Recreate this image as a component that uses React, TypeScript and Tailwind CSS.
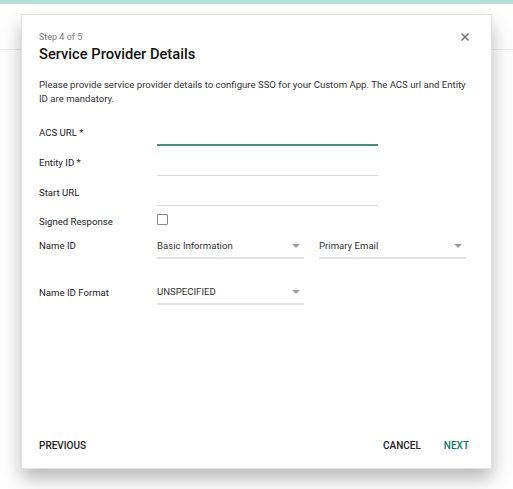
import React from "react";

function Arrow() {
  return (
    <svg width="8" height="4" viewBox="0 0 8 4" className="shrink-0">
      <path d="M0 0 L8 0 L4 4 Z" fill="#a0a0a0" />
    </svg>
  );
}

function Select({ value }: { value: string }) {
  return (
    <div className="w-[147px] h-[24px] flex items-center justify-between border-b-2 border-[#e3e3e3] pr-[4px]">
      <span className="text-[9.6px] text-[#333]">{value}</span>
      <Arrow />
    </div>
  );
}

export default function App() {
  return (
    <div className="relative w-[513px] h-[489px] bg-white overflow-hidden" style={{ fontFamily: "Roboto, 'Liberation Sans', sans-serif" }}>
      <div className="h-[4px] bg-[#b4dfd9]" />
      <div className="mt-[45px] h-px bg-[#ececec]" />

      <div className="absolute left-[21px] top-[14px] w-[471px] h-[455px] bg-white border border-[#e2e2e2] shadow-[0_10px_18px_rgba(0,0,0,0.28)] flex flex-col">
        <button className="absolute right-[22px] top-[18px] w-[8px] h-[8px] flex items-center justify-center">
          <svg width="8" height="8" viewBox="0 0 8 8">
            <path d="M0.5 0.5 L7.5 7.5 M7.5 0.5 L0.5 7.5" stroke="#6b6b6b" strokeWidth="1.4" />
          </svg>
        </button>

        <div className="pl-[17px] pr-[18px] pt-[16px]">
          <div className="text-[9px] leading-[13px] text-[#7a7a7a]">Step 4 of 5</div>
          <div className="text-[14.7px] leading-[20px] font-medium text-[#111]">Service Provider Details</div>
          <p className="mt-[14px] text-[9.6px] leading-[14px] text-[#333]">
            Please provide service provider details to configure SSO for your Custom App. The ACS url and Entity ID are mandatory.
          </p>

          <div className="mt-[15px] flex flex-col">
            <div className="flex h-[30px] items-start">
              <div className="w-[118px] pt-[5px] text-[9.6px] leading-[14px] text-[#222]">ACS URL *</div>
              <div className="w-[221px] h-[25px] border-b-2 border-[#4f8a7c]" />
            </div>
            <div className="flex h-[30px] items-start">
              <div className="w-[118px] pt-[5px] text-[9.6px] leading-[14px] text-[#222]">Entity ID *</div>
              <div className="w-[221px] h-[25px] border-b border-[#d9d9d9]" />
            </div>
            <div className="flex h-[30px] items-start">
              <div className="w-[118px] pt-[5px] text-[9.6px] leading-[14px] text-[#222]">Start URL</div>
              <div className="w-[221px] h-[25px] border-b border-[#d9d9d9]" />
            </div>
            <div className="flex h-[24px] items-start">
              <div className="w-[118px] pt-[4px] text-[9.6px] leading-[14px] text-[#222]">Signed Response</div>
              <div className="mt-[3px] w-[11px] h-[11px] border border-[#8a8a8a] rounded-[1px]" />
            </div>
            <div className="flex items-start">
              <div className="w-[118px] pt-[4px] text-[9.6px] leading-[14px] text-[#222]">Name ID</div>
              <div className="flex gap-[15px]">
                <Select value="Basic Information" />
                <Select value="Primary Email" />
              </div>
            </div>
            <div className="mt-[22px] flex items-start">
              <div className="w-[118px] pt-[5px] text-[9.6px] leading-[14px] text-[#222]">Name ID Format</div>
              <Select value="UNSPECIFIED" />
            </div>
          </div>
        </div>

        <div className="mt-auto mb-[15px] pl-[17px] pr-[22px] flex items-center">
          <button className="text-[10px] font-medium text-[#222] leading-[14px]">PREVIOUS</button>
          <div className="flex-1" />
          <button className="text-[10px] font-medium text-[#222] leading-[14px]">CANCEL</button>
          <button className="ml-[23px] text-[10px] font-medium text-[#0f7a66] leading-[14px]">NEXT</button>
        </div>
      </div>
    </div>
  );
}
